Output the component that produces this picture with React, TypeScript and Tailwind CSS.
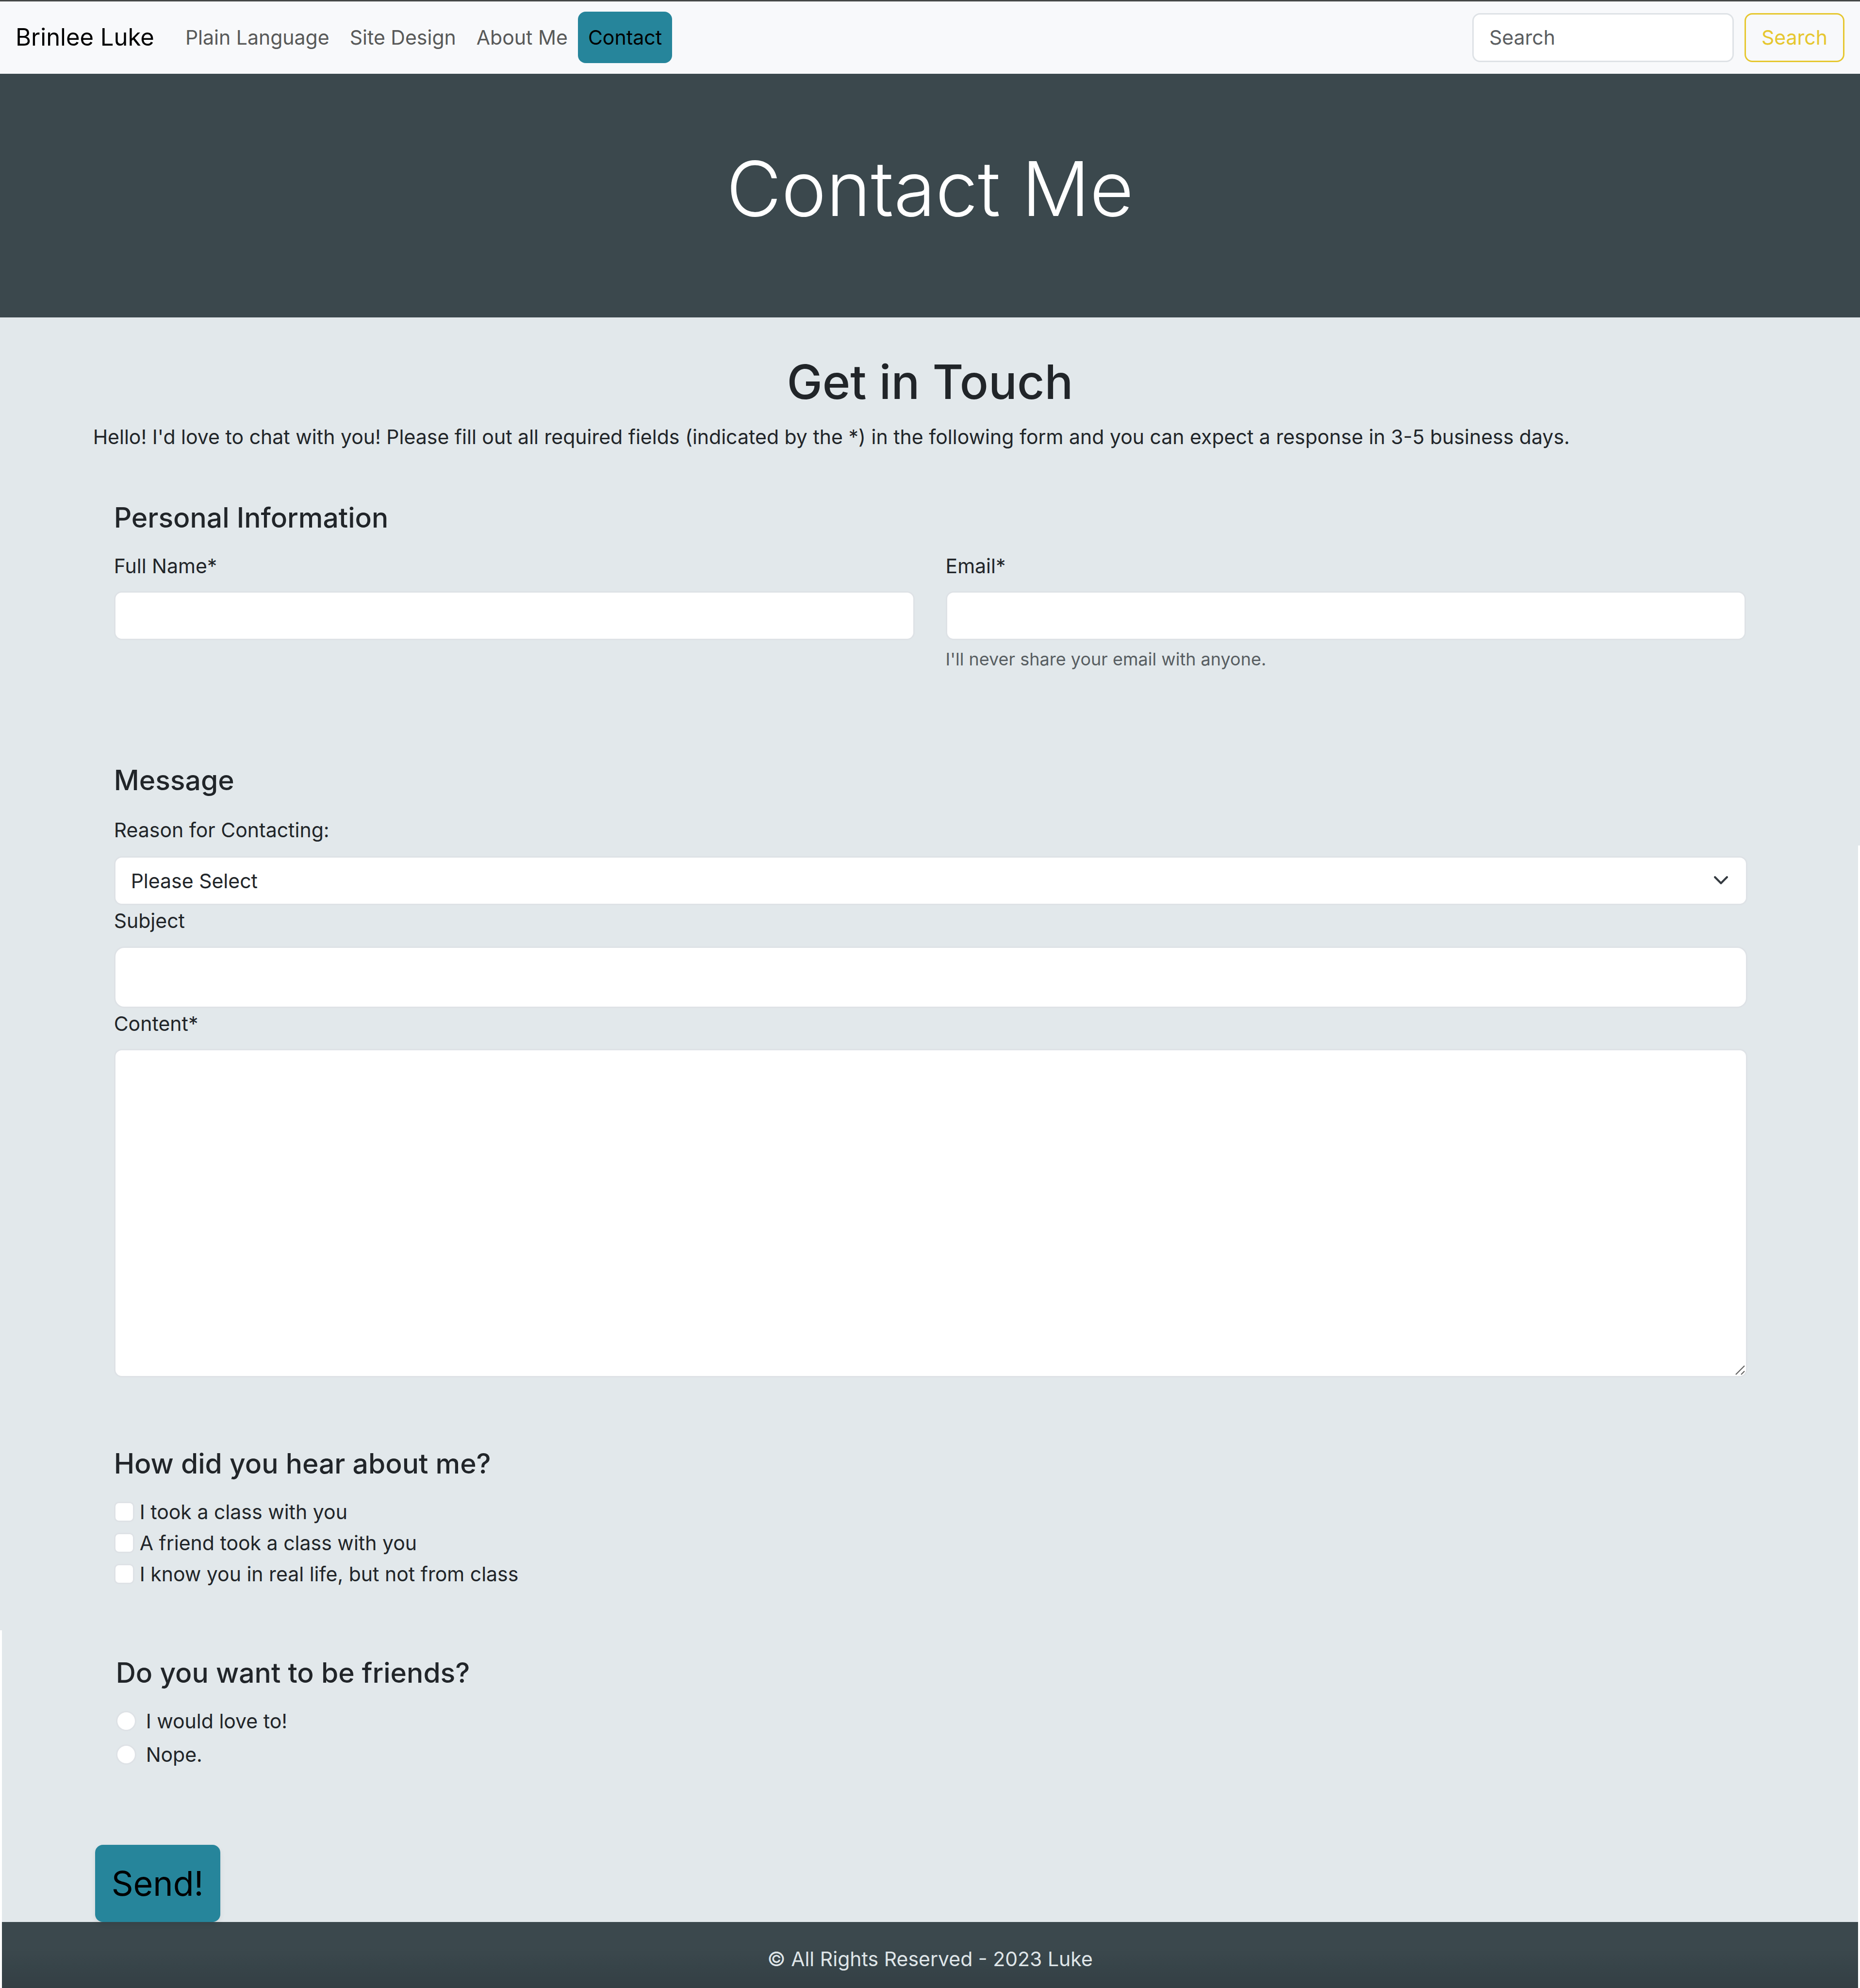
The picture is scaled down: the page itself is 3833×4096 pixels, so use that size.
import type { ReactNode } from "react";

const fieldBase =
  "block w-full border-[3px] border-[#dee2e6] bg-white text-[#212529] outline-none";

const navLinks = ["Plain Language", "Site Design", "About Me"];

const sources = [
  "I took a class with you",
  "A friend took a class with you",
  "I know you in real life, but not from class",
];

const answers = ["I would love to!", "Nope."];

function SectionTitle({ children }: { children: ReactNode }) {
  return <h3 className="text-[57px] leading-[80px] font-medium">{children}</h3>;
}

function NavBar() {
  return (
    <nav className="flex items-center justify-between border-t-[3px] border-[#464948] bg-[#f8f9fb] px-8 pt-[21px] pb-[22px]">
      <div className="flex items-center">
        <a href="#home" className="mr-[43px] text-[49px] leading-[80px] text-black">
          Brinlee Luke
        </a>
        <ul className="flex items-center">
          {navLinks.map((label) => (
            <li key={label}>
              <a href="#page" className="block px-[21px] py-[21px] leading-[64px] text-[#585959]">
                {label}
              </a>
            </li>
          ))}
          <li>
            <a
              href="#contact"
              aria-current="page"
              className="block rounded-2xl bg-[#26859b] px-[21px] py-[21px] leading-[64px] text-black"
            >
              Contact
            </a>
          </li>
        </ul>
      </div>
      <form role="search" className="flex gap-[22px]" onSubmit={(e) => e.preventDefault()}>
        <input
          type="search"
          aria-label="Search"
          placeholder="Search"
          className="h-[101px] w-[539px] rounded-2xl border-[3px] border-[#dee2e6] bg-white px-8 outline-none placeholder:text-[#5b5e61]"
        />
        <button
          type="submit"
          className="h-[101px] rounded-2xl border-[3px] border-[#e6c72f] px-8 text-[#e6c72f]"
        >
          Search
        </button>
      </form>
    </nav>
  );
}

export default function App() {
  return (
    <div className="min-h-screen bg-[#e2e8eb] font-['Inter','Liberation_Sans',sans-serif] text-[41px] leading-[64px] text-[#212529]">
      <NavBar />
      <header className="bg-[#3b484d] pt-[134px] pb-[163px] text-center">
        <h1 className="text-[156px] leading-[205px] font-light text-white">Contact Me</h1>
      </header>

      <form onSubmit={(e) => e.preventDefault()}>
        <div className="px-[5%] pt-[69px]">
          <h2 className="text-center text-[98px] leading-[128px] font-medium">Get in Touch</h2>
          <p className="mt-[17px]">
            Hello! I'd love to chat with you! Please fill out all required fields (indicated by the
            *) in the following form and you can expect a response in 3-5 business days.
          </p>

          <div className="px-[43px] pt-[95px]">
            <SectionTitle>Personal Information</SectionTitle>
            <div className="mt-[27px] grid grid-cols-2 gap-[64px]">
              <div>
                <label htmlFor="name" className="block">
                  Full Name*
                </label>
                <input
                  id="name"
                  type="text"
                  className={`${fieldBase} mt-5 h-[101px] rounded-2xl px-8`}
                />
              </div>
              <div>
                <label htmlFor="email" className="block">
                  Email*
                </label>
                <input
                  id="email"
                  type="email"
                  aria-describedby="email-help"
                  className={`${fieldBase} mt-5 h-[101px] rounded-2xl px-8`}
                />
                <p id="email-help" className="mt-[11px] text-[36px] leading-[56px] text-[#585e62]">
                  I'll never share your email with anyone.
                </p>
              </div>
            </div>

            <div className="pt-[182px]">
              <SectionTitle>Message</SectionTitle>
              <label htmlFor="reason" className="mt-[30px] block">
                Reason for Contacting:
              </label>
            </div>
          </div>
        </div>

        <div className="px-[5%] shadow-[inset_-4px_0_0_0_#fff]">
          <div className="pt-[22px] pr-10 pl-[43px]">
            <div className="relative">
              <select
                id="reason"
                defaultValue=""
                className={`${fieldBase} h-[101px] appearance-none rounded-2xl px-8`}
              >
                <option value="">Please Select</option>
              </select>
              <svg
                viewBox="0 0 16 16"
                aria-hidden="true"
                className="pointer-events-none absolute top-[33px] right-[38px] size-[33px]"
              >
                <path
                  d="m2 5 6 6 6-6"
                  fill="none"
                  stroke="#343a40"
                  strokeWidth="2"
                  strokeLinecap="round"
                  strokeLinejoin="round"
                />
              </svg>
            </div>

            <label htmlFor="subject" className="block">
              Subject
            </label>
            <input
              id="subject"
              type="text"
              className={`${fieldBase} mt-[21px] h-[127px] rounded-[21px] px-[43px]`}
            />

            <label htmlFor="content" className="block">
              Content*
            </label>
            <div className="relative mt-5">
              <textarea
                id="content"
                className={`${fieldBase} h-[677px] resize-none rounded-2xl px-8 py-4`}
              />
              <svg
                viewBox="0 0 20 20"
                aria-hidden="true"
                className="pointer-events-none absolute right-[5px] bottom-[5px] size-5"
              >
                <path d="M1 19 19 1M12 19l7-7" fill="none" stroke="#666" strokeWidth="2.4" />
              </svg>
            </div>

            <fieldset className="pt-[138px]">
              <legend className="contents">
                <SectionTitle>How did you hear about me?</SectionTitle>
              </legend>
              <div className="pt-[27px] pb-[84px]">
                {sources.map((label) => (
                  <label key={label} className="flex items-center gap-[11px]">
                    <input
                      type="checkbox"
                      className="size-[42px] appearance-none rounded-[10px] border-[3px] border-[#dee2e6] bg-white checked:bg-[#26859b]"
                    />
                    {label}
                  </label>
                ))}
              </div>
            </fieldset>
          </div>
        </div>

        <div className="border-l-4 border-white px-[5%] shadow-[inset_-4px_0_0_0_#fff]">
          <fieldset className="px-[43px] pt-12">
            <legend className="contents">
              <SectionTitle>Do you want to be friends?</SectionTitle>
            </legend>
            <div className="flex flex-col gap-[5px] pt-[27px]">
              {answers.map((label) => (
                <label key={label} className="flex items-center gap-5">
                  <input
                    type="radio"
                    name="friends"
                    className="size-[42px] appearance-none rounded-full border-[3px] border-[#dee2e6] bg-white checked:bg-[#26859b]"
                  />
                  {label}
                </label>
              ))}
            </div>
          </fieldset>
          <button
            type="submit"
            className="relative mt-[154px] block h-[159px] rounded-2xl bg-[#26859b] px-[34px] text-[70px] leading-[112px] text-black shadow-[0_5px_11px_rgba(0,0,0,0.075)]"
          >
            Send!
          </button>
        </div>
      </form>

      <footer className="border-x-4 border-white bg-linear-to-b from-[#3b484d] from-40% to-[#333f44] pt-[44px] pb-7 text-center text-[#dfe5e8]">
        <p>© All Rights Reserved - 2023 Luke</p>
      </footer>
    </div>
  );
}
